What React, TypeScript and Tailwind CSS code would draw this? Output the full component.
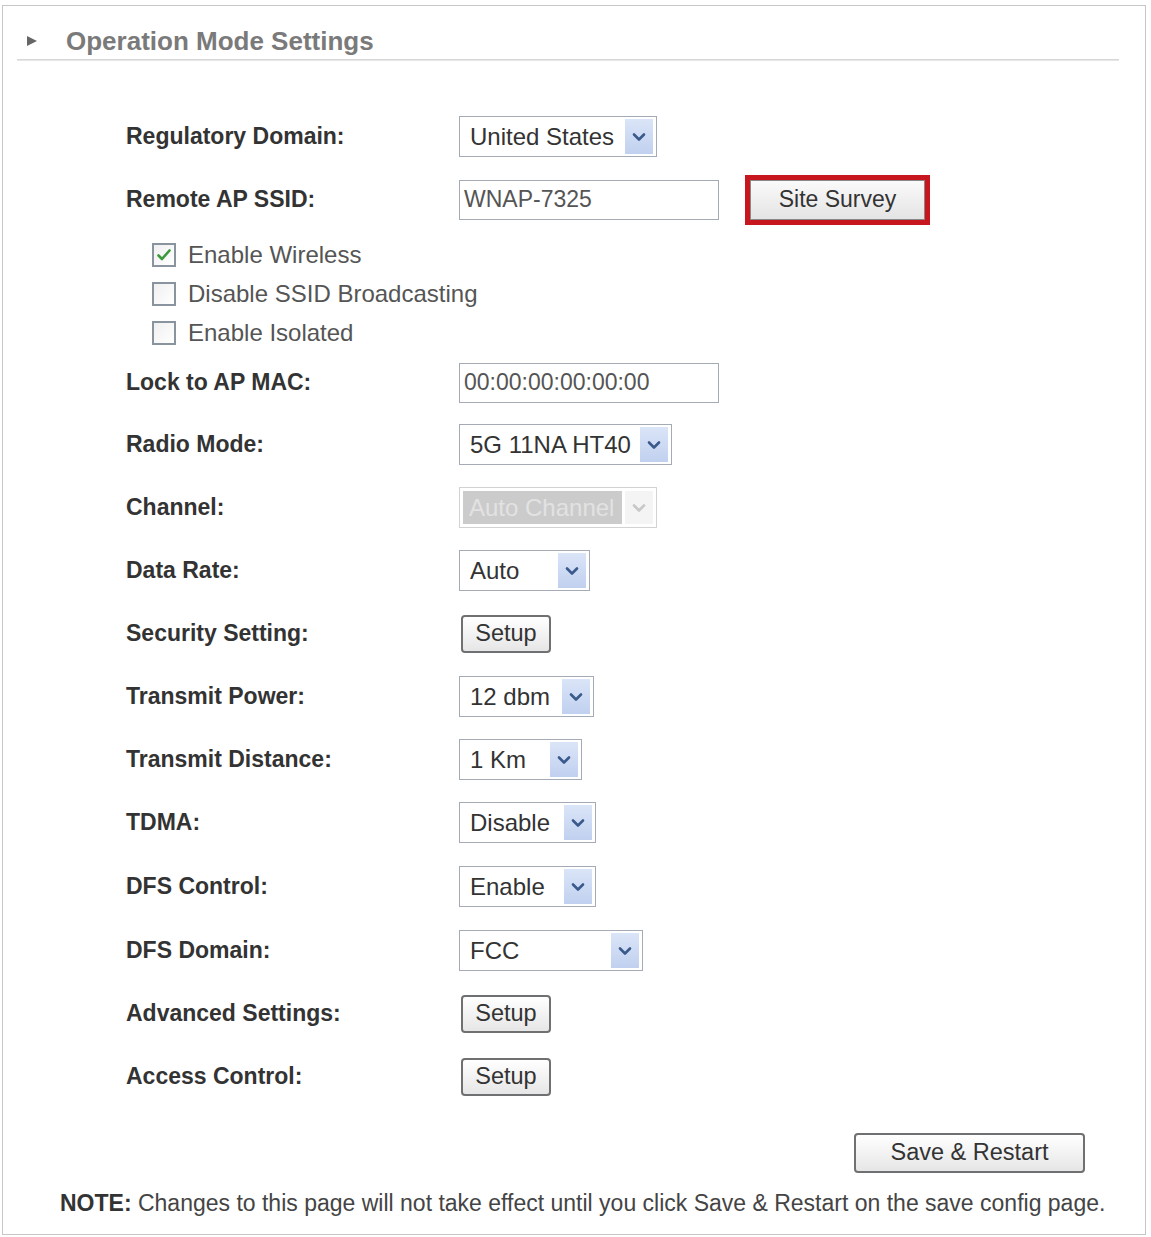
import React from 'react';

// small chevron used in the select drop buttons
const Chevron: React.FC<{ disabled?: boolean }> = ({ disabled }) => (
  <svg width="14" height="10" viewBox="0 0 14 10">
    <path
      d="M2 2.5 L7 7.5 L12 2.5"
      fill="none"
      stroke={disabled ? '#c8c8c8' : '#3b5a8c'}
      strokeWidth="2.6"
      strokeLinecap="round"
      strokeLinejoin="round"
    />
  </svg>
);

const Select: React.FC<{ value: string; width: string; disabled?: boolean }> = ({ value, width, disabled }) => {
  if (disabled) {
    return (
      <div className={`${width} h-[41px] border border-[#d2d2d2] bg-white flex items-center p-[3px]`}>
        <div className="flex-1 h-full bg-[#cbcbcb] text-[#e2e2e2] flex items-center pl-[6px] text-[24px]">{value}</div>
        <div className="w-[28px] h-full flex items-center justify-center bg-[#f4f4f4] ml-[3px]">
          <Chevron disabled />
        </div>
      </div>
    );
  }
  return (
    <div className={`${width} h-[41px] border border-[#a4abb4] bg-white flex items-center pl-[10px] pr-[3px]`}>
      <span className="flex-1 text-[24px] text-[#333] whitespace-nowrap">{value}</span>
      <div className="w-[28px] h-[35px] flex items-center justify-center bg-gradient-to-b from-[#dbe5f8] to-[#c0d0ef]">
        <Chevron />
      </div>
    </div>
  );
};

const TextInput: React.FC<{ value: string }> = ({ value }) => (
  <div className="w-[260px] h-[40px] border border-[#a4abb4] bg-white flex items-center pl-[4px] text-[23px] text-[#555]">
    {value}
  </div>
);

const SetupButton: React.FC = () => (
  <button className="ml-[2px] w-[90px] h-[38px] border-2 border-[#6e7072] rounded-[4px] bg-gradient-to-b from-[#ffffff] to-[#e6e6e6] text-[23.5px] text-[#333] flex items-center justify-center">
    Setup
  </button>
);

const Checkbox: React.FC<{ checked?: boolean; label: string }> = ({ checked, label }) => (
  <div className="h-[39px] flex items-center pl-[26px]">
    <div className="w-[24px] h-[24px] border-2 border-[#8a949e] bg-gradient-to-br from-[#f0f0f0] to-[#ffffff] flex items-center justify-center">
      {checked && (
        <svg width="16" height="14" viewBox="0 0 16 14">
          <path d="M2.5 7.5 L6 11 L13.5 2.5" fill="none" stroke="#3c9a3c" strokeWidth="2.6" strokeLinecap="round" strokeLinejoin="round" />
        </svg>
      )}
    </div>
    <span className="ml-[12px] text-[24px] text-[#555]">{label}</span>
  </div>
);

const Row: React.FC<{ label: string; h?: string; children: React.ReactNode }> = ({ label, h = 'h-[63px]', children }) => (
  <div className={`${h} flex items-center`}>
    <div className="w-[333px] text-[23px] font-bold text-[#333]">{label}</div>
    {children}
  </div>
);

export default function App() {
  return (
    <div className="w-[1151px] h-[1237px] bg-white pt-[5px] pl-[2px] font-['Liberation_Sans',Arial,sans-serif]">
      <div className="w-[1144px] h-[1230px] border border-[#c6c6c6] relative">
        {/* section header */}
        <div className="pt-[20px] pl-[23px] flex items-center">
          <svg width="12" height="12" viewBox="0 0 12 12">
            <path d="M1 1 L11 6 L1 11 Z" fill="#666" />
          </svg>
          <span className="ml-[28px] text-[26px] leading-[30px] font-bold text-[#7a7a7a]">Operation Mode Settings</span>
        </div>
        <div className="ml-[14px] mt-[3px] w-[1102px] h-[2px] bg-gradient-to-b from-[#cfcfcf] to-[#efefef]" />

        {/* settings form */}
        <div className="pl-[123px] pt-[44px]">
          <Row label="Regulatory Domain:">
            <Select value="United States" width="w-[198px]" />
          </Row>
          <Row label="Remote AP SSID:">
            <TextInput value="WNAP-7325" />
            <div className="ml-[26px] border-[5px] border-[#c8161e] p-0">
              <button className="w-[175px] h-[40px] bg-gradient-to-b from-[#fafafa] to-[#e4e4e4] border border-[#888] text-[23px] text-[#333]">
                Site Survey
              </button>
            </div>
          </Row>
          <div className="pt-[4px]">
            <Checkbox checked label="Enable Wireless" />
            <Checkbox label="Disable SSID Broadcasting" />
            <Checkbox label="Enable Isolated" />
          </div>
          <Row label="Lock to AP MAC:" h="h-[61px]">
            <TextInput value="00:00:00:00:00:00" />
          </Row>
          <Row label="Radio Mode:">
            <Select value="5G 11NA HT40" width="w-[213px]" />
          </Row>
          <Row label="Channel:">
            <Select value="Auto Channel" width="w-[198px]" disabled />
          </Row>
          <Row label="Data Rate:">
            <Select value="Auto" width="w-[131px]" />
          </Row>
          <Row label="Security Setting:">
            <SetupButton />
          </Row>
          <Row label="Transmit Power:">
            <Select value="12 dbm" width="w-[135px]" />
          </Row>
          <Row label="Transmit Distance:">
            <Select value="1 Km" width="w-[123px]" />
          </Row>
          <Row label="TDMA:">
            <Select value="Disable" width="w-[137px]" />
          </Row>
          <Row label="DFS Control:" h="h-[65px]">
            <Select value="Enable" width="w-[137px]" />
          </Row>
          <Row label="DFS Domain:">
            <Select value="FCC" width="w-[184px]" />
          </Row>
          <Row label="Advanced Settings:">
            <SetupButton />
          </Row>
          <Row label="Access Control:">
            <SetupButton />
          </Row>
        </div>

        {/* footer */}
        <div className="flex justify-end pr-[60px] mt-[25px]">
          <button className="w-[231px] h-[40px] border-2 border-[#6e7072] rounded-[4px] bg-gradient-to-b from-[#ffffff] to-[#e6e6e6] text-[23.5px] text-[#333]">
            Save &amp; Restart
          </button>
        </div>
        <p className="mt-[13px] pl-[57px] text-[23px] text-[#444] whitespace-nowrap">
          <span className="font-bold text-[#333]">NOTE:</span> Changes to this page will not take effect until you click Save &amp; Restart on the save config page.
        </p>
      </div>
    </div>
  );
}
